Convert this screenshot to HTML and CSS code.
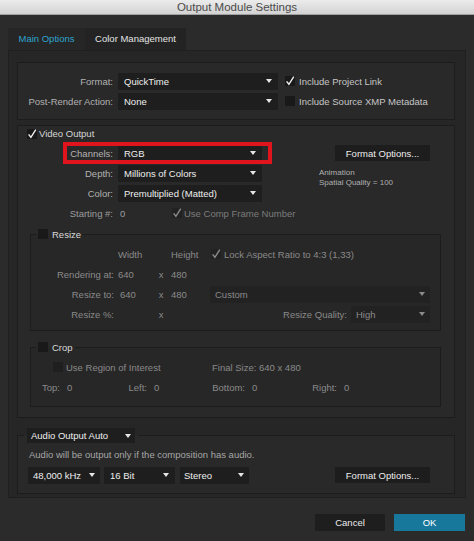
FILE: index.html
```html
<!DOCTYPE html>
<html lang="en">
<head>
<meta charset="utf-8">
<title>Output Module Settings</title>
<link rel="stylesheet" href="styles.css">
</head>
<body>
<header class="titlebar">Output Module Settings</header>
<nav class="tabs">
  <div class="tab tab-main">Main Options</div>
  <div class="tab tab-color">Color Management</div>
</nav>
<main class="panel">
  <section class="group group-format">
    <div class="row">
      <span class="lbl">Format:</span>
      <div class="dd dd-format"><span>QuickTime</span><i class="tri"></i></div>
      <span class="cb"><svg viewBox="0 0 10 10"><path d="M1.6 5.4 3.9 8.3 8.8 0.6"/></svg></span>
      <span class="opt">Include Project Link</span>
    </div>
    <div class="row">
      <span class="lbl">Post-Render Action:</span>
      <div class="dd dd-format"><span>None</span><i class="tri"></i></div>
      <span class="cb"></span>
      <span class="opt">Include Source XMP Metadata</span>
    </div>
  </section>

  <section class="group group-video">
    <div class="vo-head">
      <span class="cb"><svg viewBox="0 0 10 10"><path d="M1.6 5.4 3.9 8.3 8.8 0.6"/></svg></span>
      <span>Video Output</span>
    </div>
    <div class="vo-main">
      <div class="vo-left">
        <div class="row hl">
          <span class="lbl">Channels:</span>
          <div class="dd dd-video"><span>RGB</span><i class="tri"></i></div>
        </div>
        <div class="row">
          <span class="lbl">Depth:</span>
          <div class="dd dd-video"><span>Millions of Colors</span><i class="tri"></i></div>
        </div>
        <div class="row">
          <span class="lbl">Color:</span>
          <div class="dd dd-video"><span>Premultiplied (Matted)</span><i class="tri"></i></div>
        </div>
        <div class="row">
          <span class="lbl soft">Starting #:</span>
          <span class="start-val soft">0</span>
          <span class="cb off"><svg viewBox="0 0 10 10"><path d="M1.6 5.4 3.9 8.3 8.8 0.6"/></svg></span>
          <span class="muted">Use Comp Frame Number</span>
        </div>
      </div>
      <div class="vo-right">
        <div class="btn btn-fmt">Format Options...</div>
        <div class="codec-info">Animation<br>Spatial Quality = 100</div>
      </div>
    </div>

    <fieldset class="sub resize">
      <legend><span class="lg"><span class="cb"></span><span>Resize</span></span></legend>
      <div class="rz-grid">
        <span></span><span>Width</span><span></span><span class="rz-h">Height</span>
        <span class="rz-r"><span class="cb off lock"><svg viewBox="0 0 10 10"><path d="M1.6 5.4 3.9 8.3 8.8 0.6"/></svg></span>Lock Aspect Ratio to 4:3 (1,33)</span>

        <span class="rz-l">Rendering at:</span><span>640</span><span class="rz-x">x</span><span class="rz-h">480</span><span></span>

        <span class="rz-l">Resize to:</span><span class="rz-v">640</span><span class="rz-x">x</span><span class="rz-h">480</span>
        <span class="rz-r"><span class="dd dis dd-custom"><span>Custom</span><i class="tri"></i></span></span>

        <span class="rz-l">Resize %:</span><span></span><span class="rz-x">x</span><span></span>
        <span class="rz-r rq"><span>Resize Quality:</span><span class="dd dis dd-quality"><span>High</span><i class="tri"></i></span></span>
      </div>
    </fieldset>

    <fieldset class="sub crop">
      <legend><span class="lg"><span class="cb"></span><span>Crop</span></span></legend>
      <div class="crop-row">
        <span class="roi"><span class="cb dim"></span><span>Use Region of Interest</span></span>
        <span>Final Size: 640 x 480</span>
      </div>
      <div class="crop-grid">
        <span class="cl">Top:</span><span class="cv">0</span>
        <span class="cl">Left:</span><span class="cv">0</span>
        <span class="cl">Bottom:</span><span class="cv">0</span>
        <span class="cl">Right:</span><span class="cv">0</span>
      </div>
    </fieldset>
  </section>

  <fieldset class="group audio">
    <legend><span class="dd dd-amode"><span>Audio Output Auto</span><i class="tri"></i></span></legend>
    <p class="audio-note">Audio will be output only if the composition has audio.</p>
    <div class="row audio-row">
      <div class="dd dd-rate"><span>48,000 kHz</span><i class="tri"></i></div>
      <div class="dd dd-bits"><span>16 Bit</span><i class="tri"></i></div>
      <div class="dd dd-chan"><span>Stereo</span><i class="tri"></i></div>
      <div class="btn btn-fmt2">Format Options...</div>
    </div>
  </fieldset>
</main>
<footer class="actions">
  <div class="btn btn-cancel">Cancel</div>
  <div class="btn btn-ok">OK</div>
</footer>
</body>
</html>
```

FILE: styles.css
```css
*, *::before, *::after { box-sizing: border-box; }
html, body { margin: 0; padding: 0; }
body {
  width: 474px;
  height: 541px;
  overflow: hidden;
  background: #2b2b2b;
  font-family: "Liberation Sans", Arial, sans-serif;
  font-size: 9.5px;
  color: #b2b2b2;
}

.titlebar {
  height: 15px;
  background: linear-gradient(#ececec, #d2d2d2);
  border-bottom: 1px solid #a0a0a0;
  color: #4b4b4b;
  font-size: 11.5px;
  line-height: 14px;
  text-align: center;
}

.tabs { display: flex; height: 22px; margin: 13px 0 0 8px; }
.tab { height: 22px; line-height: 22px; text-align: center; white-space: nowrap; }
.tab-main { width: 77px; background: #262626; color: #2ea4cf; }
.tab-color { width: 101px; background: #232323; color: #e4e4e4; }

.panel {
  height: 448px;
  margin: 0 8px;
  border: 1px solid #1f1f1f;
  background: #262626;
  padding: 11px 10px 0 8px;
}

.group { border: 1px solid #1c1c1c; background: #292929; }
.group-format { padding: 8px 0; }
.group-video { margin-top: 5px; padding: 0 0 10px; }

.row { display: flex; align-items: center; height: 20px; white-space: nowrap; }
.lbl { flex: none; width: 95px; margin-right: 5px; text-align: right; }

.dd {
  flex: none;
  display: flex;
  align-items: center;
  justify-content: space-between;
  height: 17px;
  padding: 0 6px;
  background: #1e1e1e;
  color: #eeeeee;
  white-space: nowrap;
}
.tri {
  flex: none;
  width: 0;
  height: 0;
  border-left: 3.5px solid transparent;
  border-right: 3.5px solid transparent;
  border-top: 4px solid #e6e6e6;
}
.dd-format { width: 160px; }

.cb { flex: none; display: inline-block; width: 10px; height: 10px; background: #191919; }
.cb svg { display: block; width: 10px; height: 10px; overflow: visible; fill: none; stroke: #f0f0f0; stroke-width: 1.4; }
.cb.off { background: #222222; }
.cb.off svg { stroke: #8c8c8c; }
.cb.dim { background: #1f1f1f; }
.group-format .cb { margin: 0 4px 0 7px; }
.opt { color: #c6c6c6; }
.soft { color: #9c9c9c; }
.muted { color: #7c7c7c; }

.vo-head { display: flex; align-items: center; gap: 2px; height: 15px; padding-left: 9px; margin-bottom: 2px; color: #d6d6d6; }
.vo-main { display: flex; }
.vo-left { flex: none; width: 282px; }
.dd-video { width: 144px; }
.row.hl { position: relative; }
.row.hl::after {
  content: "";
  position: absolute;
  left: 45px;
  top: -1px;
  width: 209px;
  height: 22px;
  border: 4px solid #e0141c;
}
.start-val { flex: none; width: 54px; padding-left: 2px; }
.start-val + .cb { margin-right: 2px; }

.vo-right { padding-left: 0; }
.btn { display: flex; align-items: center; justify-content: center; background: #1d1d1d; color: #ececec; white-space: nowrap; }
.btn-fmt { width: 95px; height: 16px; margin: 2px 0 0 35px; }
.codec-info { margin: 7px 0 0 19px; font-size: 8px; line-height: 10px; color: #b0b0b0; }

fieldset { margin: 0; padding: 0; min-width: 0; }
.sub { margin: 5px 13px 0 12px; border: 1px solid #1c1c1c; background: #272727; }
.sub legend { margin-left: 5px; padding: 0 2px; }
.lg { display: flex; align-items: center; gap: 4px; height: 12px; color: #dadada; }
.resize { padding: 4px 0 6px; }
.crop { margin-top: 10px; padding: 4px 0 9px; }

.rz-grid {
  display: grid;
  grid-template-columns: 87px 38px 10px 44px 220px;
  grid-auto-rows: 20px;
  align-items: center;
  color: #8a8a8a;
  white-space: nowrap;
}
.rz-l { text-align: right; padding-right: 4px; }
.rz-v { padding-left: 2px; }
.rz-x { text-align: center; }
.rz-h { padding-left: 5px; }
.rz-r { display: flex; align-items: center; }
.rz-r .lock { margin: 0 3px 0 1px; }
.rq { justify-content: flex-end; }
.dd.dis { background: #222222; color: #8a8a8a; padding: 0 5px; }
.dd.dis .tri { border-top-color: #8a8a8a; }
.dd-custom { width: 220px; }
.dd-quality { width: 79px; margin-left: 4px; }

.crop-row { display: flex; align-items: center; height: 20px; color: #8a8a8a; white-space: nowrap; }
.roi { flex: none; width: 181px; display: flex; align-items: center; gap: 3px; padding-left: 22px; }
.crop-grid {
  display: grid;
  grid-template-columns: 29px 50px 37px 58px 40px 52px 40px 40px;
  grid-auto-rows: 20px;
  align-items: center;
  color: #8a8a8a;
  white-space: nowrap;
}
.cl { text-align: right; }
.cv { padding-left: 7px; }

.audio { margin-top: 10px; padding: 2px 0 8px 0; }
.audio legend { margin-left: 6px; padding: 0 3px; }
.dd-amode { width: 108px; height: 15px; padding: 0 4px; }
.audio-note { margin: 0; padding-left: 11px; height: 20px; line-height: 20px; color: #a6a6a6; white-space: nowrap; }
.audio-row { padding-left: 10px; }
.dd-rate { width: 72px; margin-right: 4px; padding: 0 5px; }
.dd-bits { width: 71px; margin-right: 5px; }
.dd-chan { width: 69px; padding: 0 5px 0 4px; }
.btn-fmt2 { width: 95px; height: 16px; margin-left: 86px; }

.actions { display: flex; justify-content: flex-end; gap: 9px; margin: 16px 9px 0 0; }
.btn-cancel { width: 70px; height: 17px; background: #1e1e1e; }
.btn-ok { width: 71px; height: 17px; background: #18789c; color: #ffffff; }
```
